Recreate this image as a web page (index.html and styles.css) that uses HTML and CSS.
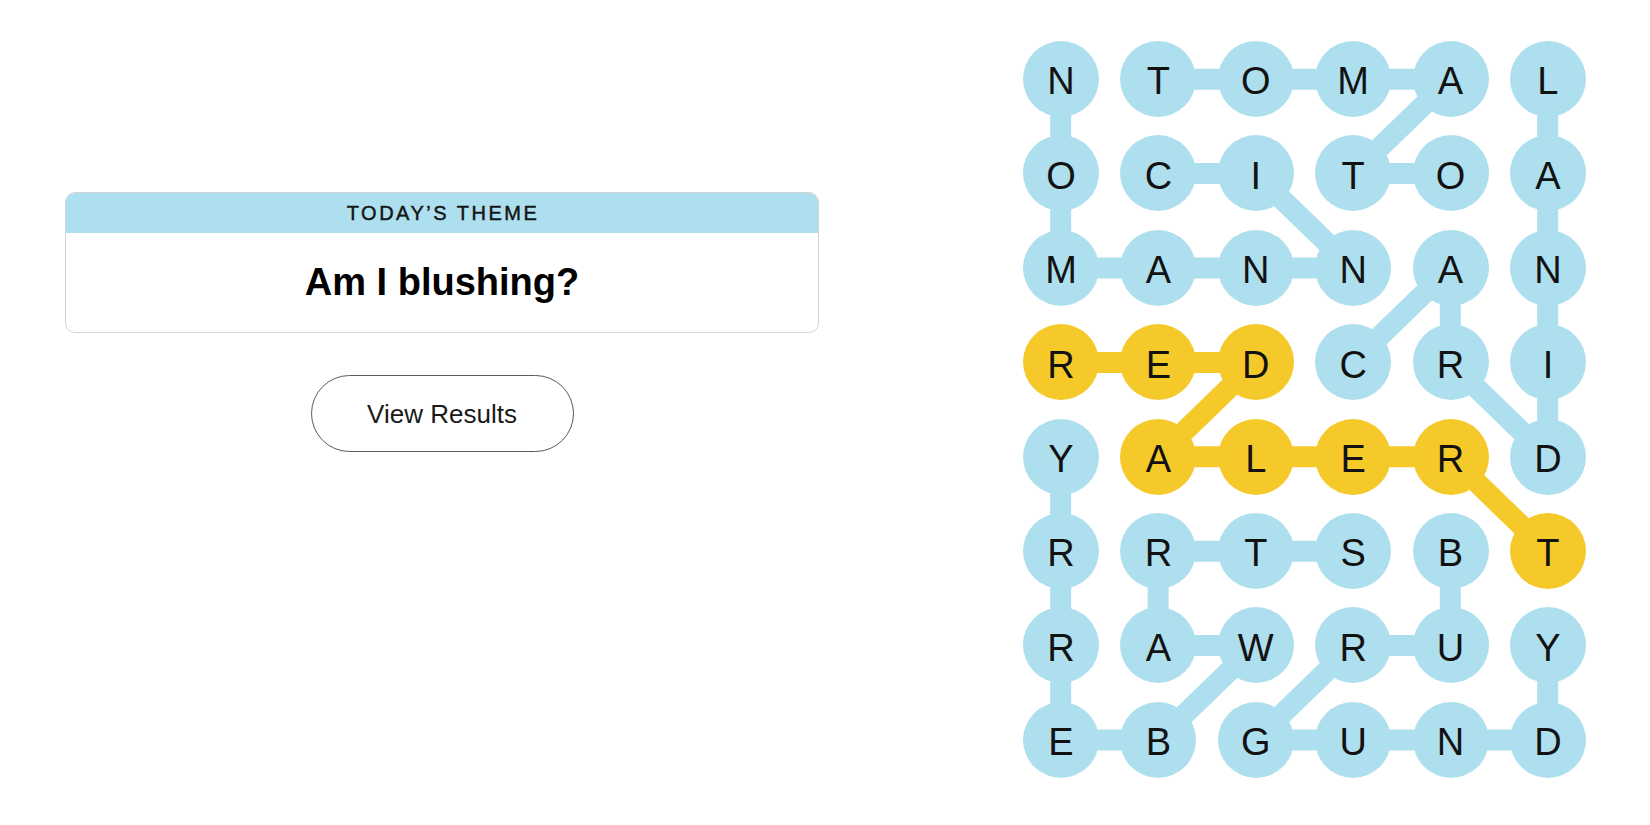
FILE: index.html
```html
<!DOCTYPE html>
<html lang="en">
<head>
<meta charset="utf-8">
<title>Strands</title>
<link rel="stylesheet" href="styles.css">
</head>
<body>
<main class="page">
  <section class="left">
    <div class="theme-card">
      <div class="theme-head">TODAY’S THEME</div>
      <div class="theme-body">Am I blushing?</div>
    </div>
    <button class="results-btn" type="button">View Results</button>
  </section>

  <section class="board">
    <svg class="links" width="584.4" height="755.2" viewBox="0 0 584.4 755.2" aria-hidden="true">
      <g fill="none" stroke-width="21" stroke-linejoin="round" stroke-linecap="round">
        <polyline class="blue" points="146.1,141.6 243.5,141.6 340.9,236 48.7,236 48.7,47.2"/>
        <polyline class="blue" points="146.1,47.2 438.3,47.2 340.9,141.6 438.3,141.6"/>
        <polyline class="blue" points="340.9,330.4 438.3,236 438.3,330.4 535.7,424.8 535.7,47.2"/>
        <polyline class="blue" points="340.9,519.2 146.1,519.2 146.1,613.6 243.5,613.6 146.1,708 48.7,708 48.7,424.8"/>
        <polyline class="blue" points="438.3,519.2 438.3,613.6 340.9,613.6 243.5,708 535.7,708 535.7,613.6"/>
        <polyline class="gold" points="48.7,330.4 243.5,330.4 146.1,424.8 438.3,424.8 535.7,519.2"/>
      </g>
    </svg>
    <div class="grid">
      <div class="cell"><span class="dot found">N</span></div>
      <div class="cell"><span class="dot found">T</span></div>
      <div class="cell"><span class="dot found">O</span></div>
      <div class="cell"><span class="dot found">M</span></div>
      <div class="cell"><span class="dot found">A</span></div>
      <div class="cell"><span class="dot found">L</span></div>

      <div class="cell"><span class="dot found">O</span></div>
      <div class="cell"><span class="dot found">C</span></div>
      <div class="cell"><span class="dot found">I</span></div>
      <div class="cell"><span class="dot found">T</span></div>
      <div class="cell"><span class="dot found">O</span></div>
      <div class="cell"><span class="dot found">A</span></div>

      <div class="cell"><span class="dot found">M</span></div>
      <div class="cell"><span class="dot found">A</span></div>
      <div class="cell"><span class="dot found">N</span></div>
      <div class="cell"><span class="dot found">N</span></div>
      <div class="cell"><span class="dot found">A</span></div>
      <div class="cell"><span class="dot found">N</span></div>

      <div class="cell"><span class="dot spangram">R</span></div>
      <div class="cell"><span class="dot spangram">E</span></div>
      <div class="cell"><span class="dot spangram">D</span></div>
      <div class="cell"><span class="dot found">C</span></div>
      <div class="cell"><span class="dot found">R</span></div>
      <div class="cell"><span class="dot found">I</span></div>

      <div class="cell"><span class="dot found">Y</span></div>
      <div class="cell"><span class="dot spangram">A</span></div>
      <div class="cell"><span class="dot spangram">L</span></div>
      <div class="cell"><span class="dot spangram">E</span></div>
      <div class="cell"><span class="dot spangram">R</span></div>
      <div class="cell"><span class="dot found">D</span></div>

      <div class="cell"><span class="dot found">R</span></div>
      <div class="cell"><span class="dot found">R</span></div>
      <div class="cell"><span class="dot found">T</span></div>
      <div class="cell"><span class="dot found">S</span></div>
      <div class="cell"><span class="dot found">B</span></div>
      <div class="cell"><span class="dot spangram">T</span></div>

      <div class="cell"><span class="dot found">R</span></div>
      <div class="cell"><span class="dot found">A</span></div>
      <div class="cell"><span class="dot found">W</span></div>
      <div class="cell"><span class="dot found">R</span></div>
      <div class="cell"><span class="dot found">U</span></div>
      <div class="cell"><span class="dot found">Y</span></div>

      <div class="cell"><span class="dot found">E</span></div>
      <div class="cell"><span class="dot found">B</span></div>
      <div class="cell"><span class="dot found">G</span></div>
      <div class="cell"><span class="dot found">U</span></div>
      <div class="cell"><span class="dot found">N</span></div>
      <div class="cell"><span class="dot found">D</span></div>
    </div>
  </section>
</main>
</body>
</html>
```

FILE: styles.css
```css
* {
  box-sizing: border-box;
}

html, body {
  margin: 0;
  padding: 0;
  background: #ffffff;
}

body {
  font-family: "Liberation Sans", Arial, sans-serif;
  color: #121212;
}

.page {
  display: flex;
  align-items: flex-start;
  width: 1650px;
  height: 825px;
}

.left {
  width: 884px;
  flex: none;
  padding: 192px 65px 0 65px;
  display: flex;
  flex-direction: column;
  align-items: center;
}

.theme-card {
  width: 754px;
  border: 1px solid #d3d3d3;
  border-radius: 10px;
  overflow: hidden;
  background: #fff;
}

.theme-head {
  height: 40px;
  background: #aedfee;
  display: flex;
  align-items: center;
  justify-content: center;
  font-size: 20px;
  letter-spacing: 2.5px;
  color: #141414;
  -webkit-text-stroke: 0.45px #141414;
  padding-left: 2px;
  padding-top: 1px;
}

.theme-body {
  height: 99px;
  display: flex;
  align-items: center;
  justify-content: center;
  font-size: 38px;
  font-weight: 700;
  color: #000;
}

.results-btn {
  margin-top: 42px;
  width: 263px;
  height: 77px;
  border: 1px solid #5a5a5a;
  border-radius: 40px;
  background: #fff;
  font-family: "Liberation Sans", Arial, sans-serif;
  font-size: 26px;
  color: #1a1a1a;
  padding: 2px 0 0 0;
  cursor: pointer;
}

.board {
  position: relative;
  flex: none;
  margin-left: 128.3px;
  margin-top: 31.8px;
  width: 584.4px;
  height: 755.2px;
}

.links {
  position: absolute;
  left: 0;
  top: 0;
}

.links .blue {
  stroke: #aedfee;
}

.links .gold {
  stroke: #f6c92b;
}

.grid {
  position: relative;
  display: grid;
  grid-template-columns: repeat(6, 97.4px);
  grid-template-rows: repeat(8, 94.4px);
}

.cell {
  display: flex;
  align-items: center;
  justify-content: center;
}

.dot {
  width: 76px;
  height: 76px;
  border-radius: 50%;
  display: flex;
  align-items: center;
  justify-content: center;
  font-size: 38px;
  line-height: 1;
  color: #121212;
  padding-top: 5px;
}

.dot.found {
  background: #aedfee;
}

.dot.spangram {
  background: #f6c92b;
}
```
